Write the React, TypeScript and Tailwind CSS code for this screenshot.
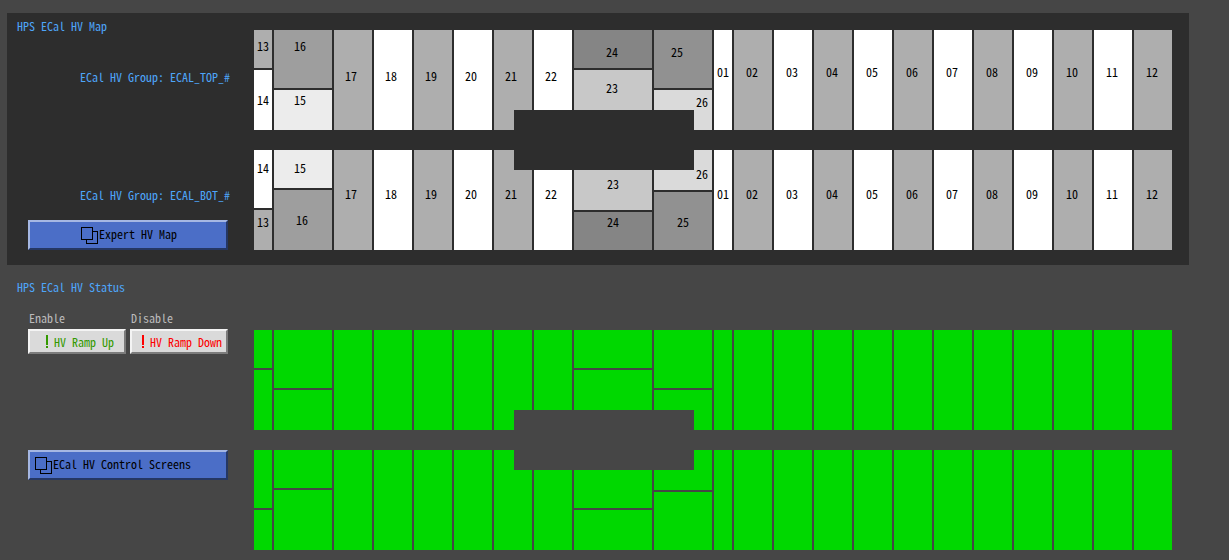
import type { ReactNode } from "react";

type Cell = { id: string; tone: string; pad: string; height: string; statusHeight: string };
type Column = Cell[];

const GREY = "bg-[#aeaeae]";
const WHITE = "bg-white";

const cell = (id: string, tone: string, pad: string, height = "flex-1", statusHeight = height): Cell => ({
  id,
  tone,
  pad,
  height,
  statusHeight,
});

const plain = (ids: string[], pad: string): Column[] =>
  ids.map((id) => [cell(id, Number(id) <= 12 === (Number(id) % 2 === 0) ? GREY : WHITE, pad)]);

const LEFT = ["17", "18", "19", "20", "21", "22"];
const RIGHT = ["02", "03", "04", "05", "06", "07", "08", "09", "10", "11", "12"];

const topColumns: Column[] = [
  [cell("13", GREY, "pt-2", "h-[38px]"), cell("14", WHITE, "pt-[22px]")],
  [cell("16", "bg-[#9e9e9e]", "pt-2 pr-1.5", "h-[58px]"), cell("15", "bg-[#ececec]", "pt-0.5 pr-1.5")],
  ...plain(LEFT, "pt-[38px] pr-1"),
  [cell("24", "bg-[#858585]", "pt-3.5 pr-0.5", "h-[38px]"), cell("23", "bg-[#c8c8c8]", "pt-2.5 pr-0.5")],
  [cell("25", "bg-[#919191]", "pt-3.5 pr-3", "h-[58px]"), cell("26", "bg-[#dadada]", "pt-1 pr-1 justify-end")],
  [cell("01", WHITE, "pt-[34px]")],
  ...plain(RIGHT, "pt-[34px] pr-0.5"),
];

const bottomColumns: Column[] = [
  [cell("14", WHITE, "pt-2.5", "h-[58px]"), cell("13", GREY, "pt-1")],
  [cell("15", "bg-[#ececec]", "pt-2.5 pr-1.5", "h-[38px]"), cell("16", "bg-[#9e9e9e]", "pt-[22px] pr-0.5")],
  ...plain(LEFT, "pt-9 pr-1"),
  [cell("23", "bg-[#c8c8c8]", "pt-[26px]", "h-[60px]", "h-[58px]"), cell("24", "bg-[#858585]", "pt-0.5")],
  [cell("26", "bg-[#dadada]", "pt-4 pr-1 justify-end", "h-[40px]"), cell("25", "bg-[#919191]", "pt-[22px]")],
  [cell("01", WHITE, "pt-9")],
  ...plain(RIGHT, "pt-9 pr-0.5"),
];

function CrystalMap({ columns, notch, status }: { columns: Column[]; notch: string; status?: boolean }) {
  return (
    <div className="grid h-[100px] grid-cols-[18fr_58fr_repeat(6,38fr)_78fr_58fr_18fr_repeat(11,38fr)] grid-rows-1 gap-x-0.5">
      {columns.map((column, i) => (
        <div key={i} className="row-start-1 flex min-w-0 flex-col gap-0.5" style={{ gridColumnStart: i + 1 }}>
          {column.map((c) => (
            <div
              key={c.id}
              className={`flex items-start justify-center ${status ? `bg-[#00d800] ${c.statusHeight}` : `${c.tone} ${c.pad} ${c.height}`}`}
            >
              {!status && c.id}
            </div>
          ))}
        </div>
      ))}
      <div className={`z-10 col-start-7 col-end-11 row-start-1 mr-[18px] ml-5 h-5 ${notch}`} />
    </div>
  );
}

function ScreensIcon() {
  return (
    <svg width="17" height="17" viewBox="0 0 17 17" fill="#4b6ec7" stroke="#000" className="mt-px shrink-0">
      <rect x="5.5" y="4.5" width="11" height="12" />
      <rect x="0.5" y="0.5" width="11" height="12" />
    </svg>
  );
}

function ScreenButton({ children, align }: { children: ReactNode; align: string }) {
  return (
    <button
      type="button"
      className={`ml-[21px] flex h-[30px] w-[200px] items-start gap-px border-2 border-t-[#a5b7e3] border-r-[#253763] border-b-[#253763] border-l-[#a5b7e3] bg-[#4b6ec7] pt-1 ${align}`}
    >
      <ScreensIcon />
      {children}
    </button>
  );
}

function RampButton({ title, label, color }: { title: string; label: string; color: string }) {
  return (
    <div className="flex w-[98px] flex-col gap-[3px]">
      <span className="pl-px text-[#bbbbbb]">{title}</span>
      <button
        type="button"
        className={`flex h-[25px] items-center justify-center border-2 border-t-[#f4f4f4] border-r-[#7c7c7c] border-b-[#7c7c7c] border-l-[#f4f4f4] bg-[#dadada] whitespace-nowrap ${color}`}
      >
        <svg width="14" height="13" viewBox="0 0 14 13" fill="currentColor" className="shrink-0">
          <rect x="6" y="0" width="2" height="10" />
          <rect x="6" y="11" width="2" height="2" />
        </svg>
        {label}
      </button>
    </div>
  );
}

export default function App() {
  return (
    <main className="min-h-screen bg-[#464646] pt-[13px] pr-10 pl-[7px] font-['Noto_Sans_Mono_CJK_JP','Liberation_Mono',monospace] text-[12px] leading-4 text-black">
      <section className="flex bg-[#2d2d2d] pr-[17px] pb-[15px]">
        <div className="flex w-[247px] shrink-0 flex-col pt-[5px] text-[#4ea5f9]">
          <h2 className="ml-2.5">HPS ECal HV Map</h2>
          <p className="mt-[35px] mr-6 text-right">ECal HV Group: ECAL_TOP_#</p>
          <p className="mt-[102px] mr-6 mb-[17px] text-right">ECal HV Group: ECAL_BOT_#</p>
          <div className="text-black">
            <ScreenButton align="justify-center pl-0.5">Expert HV Map</ScreenButton>
          </div>
        </div>
        <div className="flex min-w-0 flex-1 flex-col gap-5 pt-[17px]">
          <CrystalMap columns={topColumns} notch="self-end bg-[#2d2d2d]" />
          <CrystalMap columns={bottomColumns} notch="self-start bg-[#2d2d2d]" />
        </div>
      </section>

      <section className="flex pr-[17px] pb-2.5">
        <div className="flex w-[247px] shrink-0 flex-col pt-3.5">
          <h2 className="ml-2.5 text-[#4ea5f9]">HPS ECal HV Status</h2>
          <div className="mt-[15px] mb-24 ml-[21px] flex gap-1">
            <RampButton title="Enable" label="HV Ramp Up" color="text-[#339900]" />
            <RampButton title="Disable" label="HV Ramp Down" color="text-[#fd0000]" />
          </div>
          <ScreenButton align="pl-[5px]">ECal HV Control Screens</ScreenButton>
        </div>
        <div className="flex min-w-0 flex-1 flex-col gap-5 pt-[65px]">
          <CrystalMap columns={topColumns} notch="self-end bg-[#464646]" status />
          <CrystalMap columns={bottomColumns} notch="self-start bg-[#464646]" status />
        </div>
      </section>
    </main>
  );
}
